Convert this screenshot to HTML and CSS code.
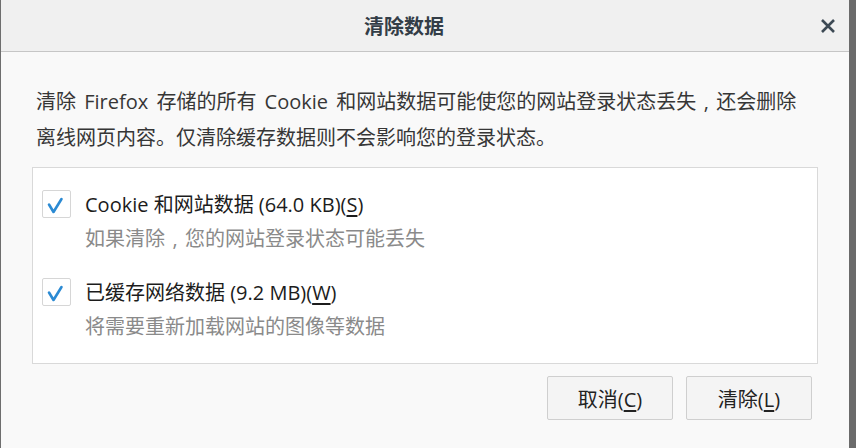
FILE: index.html
```html
<!DOCTYPE html>
<html lang="zh-CN">
<head>
<meta charset="utf-8">
<title>清除数据</title>
<link rel="stylesheet" href="styles.css">
</head>
<body>
<div class="dialog">
  <div class="titlebar">
    <div class="title">清除数据</div>
    <button class="close" aria-label="关闭">
      <svg width="16" height="16" viewBox="0 0 16 16"><path d="M2 2 L14 14 M14 2 L2 14" stroke="#3d4a55" stroke-width="2.6" fill="none"/></svg>
    </button>
  </div>
  <div class="content">
    <p class="desc">清除 Firefox 存储的所有 Cookie 和网站数据可能使您的网站登录状态丢失<span class="comma">,</span>还会删除<br>离线网页内容。仅清除缓存数据则不会影响您的登录状态。</p>
    <div class="group">
      <div class="option">
        <span class="checkbox"><svg width="27" height="27" viewBox="0 0 27 27"><path d="M6 13.5 L10.5 21 L18.5 8" stroke="#2b8ad3" stroke-width="2.6" fill="none" stroke-linecap="round" stroke-linejoin="round"/></svg></span>
        <div class="text">
          <div class="label">Cookie 和网站数据 (64.0 KB)(<u>S</u>)</div>
          <div class="hint">如果清除<span class="comma">,</span>您的网站登录状态可能丢失</div>
        </div>
      </div>
      <div class="option">
        <span class="checkbox"><svg width="27" height="27" viewBox="0 0 27 27"><path d="M6 13.5 L10.5 21 L18.5 8" stroke="#2b8ad3" stroke-width="2.6" fill="none" stroke-linecap="round" stroke-linejoin="round"/></svg></span>
        <div class="text">
          <div class="label">已缓存网络数据 (9.2 MB)(<u>W</u>)</div>
          <div class="hint">将需要重新加载网站的图像等数据</div>
        </div>
      </div>
    </div>
    <div class="buttons">
      <button class="btn">取消(<u>C</u>)</button>
      <button class="btn">清除(<u>L</u>)</button>
    </div>
  </div>
</div>
</body>
</html>
```

FILE: styles.css
```css
html, body {
  margin: 0;
  padding: 0;
  background: #f9f9f9;
}
body {
  font-family: "Open Sans", "Noto Sans CJK SC", sans-serif;
  font-size: 20px;
  color: #333;
}
.dialog {
  box-sizing: border-box;
  width: 856px;
  height: 448px;
  border-left: 1px solid #6e6e6e;
  border-right: 7px solid #6b6b6b;
  display: flex;
  flex-direction: column;
  background: #f9f9f9;
}
.titlebar {
  height: 51px;
  border-bottom: 1px solid #c6c6c6;
  background: #f0f0f0;
  display: flex;
  align-items: center;
}
.title {
  flex: 1;
  text-align: center;
  font-weight: bold;
  font-size: 20px;
  color: #333d47;
  font-family: "Noto Sans CJK SC", sans-serif;
}
.close {
  width: 42px;
  height: 51px;
  border: 0;
  padding: 0;
  background: transparent;
  display: flex;
  align-items: center;
  justify-content: center;
}
.content {
  flex: 1;
  display: flex;
  flex-direction: column;
  padding: 0 31px 0 31px;
}
.desc {
  margin: 32px 0 11px 4px;
  line-height: 36px;
  color: #363636;
  word-spacing: 3px;
}
.comma {
  display: inline-block;
  width: 1em;
  text-align: center;
}
.group {
  background: #fff;
  border: 1px solid #d9d9d9;
  padding: 22px 10px 21px 9px;
  display: flex;
  flex-direction: column;
  gap: 24px;
}
.option {
  display: flex;
  align-items: flex-start;
  gap: 14px;
}
.checkbox {
  box-sizing: border-box;
  width: 29px;
  height: 28px;
  border: 1px solid #d6d6d6;
  border-radius: 2px;
  background: #fff;
  display: flex;
  align-items: center;
  justify-content: center;
  flex: none;
}
.checkbox svg { display: block; }
.label {
  line-height: 30px;
  color: #1c1c1c;
}
.hint {
  margin-top: 4px;
  line-height: 30px;
  color: #8a8a8a;
}
.buttons {
  display: flex;
  justify-content: flex-end;
  gap: 13px;
  margin-top: 12px;
  padding-right: 6px;
}
.btn {
  box-sizing: border-box;
  width: 126px;
  height: 44px;
  background: #f4f4f4;
  border: 1px solid #cfcfcf;
  border-radius: 2px;
  font-family: "Open Sans", "Noto Sans CJK SC", sans-serif;
  font-size: 20px;
  color: #222;
  padding: 0;
}
u {
  text-underline-offset: 3px;
}
```
